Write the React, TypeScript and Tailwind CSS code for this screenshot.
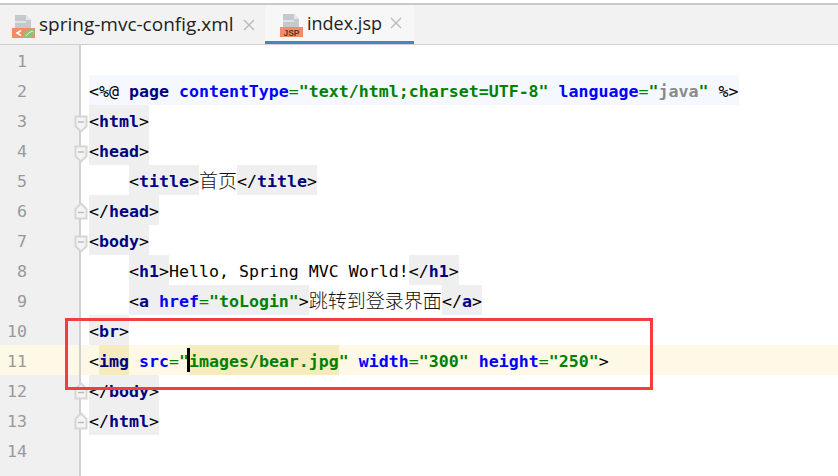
import type { ReactNode } from "react"

const mono = "font-['DejaVu_Sans_Mono','Liberation_Mono',monospace]"

// token helpers
const T = ({ children }: { children: ReactNode }) => <span className="font-bold text-[#000080]">{children}</span>
const A = ({ children }: { children: ReactNode }) => <span className="font-bold text-[#0000ff]">{children}</span>
const V = ({ children }: { children: ReactNode }) => <span className="font-bold text-[#008000]">{children}</span>
const G = ({ children }: { children: ReactNode }) => <span className="inline-block h-[30px] bg-[#efefef]">{children}</span>
const Y = ({ children }: { children: ReactNode }) => <span className="inline-block h-[30px] bg-[#f6ebbc]">{children}</span>
const Cjk = ({ children }: { children: ReactNode }) => (
  <span className="inline-block h-[30px] align-top text-[19px] leading-[30px] text-[#111] font-['Noto_Sans_CJK_SC',sans-serif] font-light">{children}</span>
)
const Tag = ({ name }: { name: string }) => <G>&lt;{name.startsWith("/") ? "/" : ""}<T>{name.replace("/", "")}</T>&gt;</G>

function FoldMark({ up }: { up?: boolean }) {
  return (
    <svg viewBox="0 0 14 18" className={`absolute left-[74px] h-[18px] w-[14px] ${up ? "top-[7px]" : "top-[10px]"}`}>
      <path
        d={up ? "M1.5 16.5h11V7L7 1.5 1.5 7z" : "M1.5 1.5h11V11L7 16.5 1.5 11z"}
        fill="#f4f4f4"
        stroke="#d6d6d6"
        strokeWidth="2"
      />
      <path d={up ? "M4 10.5h6" : "M4 7h6"} stroke="#b8b8b8" strokeWidth="1.4" />
    </svg>
  )
}

function Row({ n, fold, bg, children }: { n: number; fold?: "open" | "close"; bg?: string; children?: ReactNode }) {
  return (
    <div className={`flex h-[30px] leading-[34px] text-[16.6px] ${bg ?? ""}`}>
      <div className={`relative w-[81px] shrink-0 border-r-2 border-[#d0d0d0] ${bg ? "" : "bg-[#f0f0f0]"}`}>
        <span className="block w-[27px] text-right text-[#999]">{n}</span>
        {fold && <FoldMark up={fold === "close"} />}
      </div>
      <div className="whitespace-pre pl-[8px] text-black">{children}</div>
    </div>
  )
}

function FileBase() {
  return (
    <>
      <path d="M3 0h11l5 5v8H3z" fill="#c3c9cd" />
      <path d="M14 0v5h5z" fill="#e6e8ea" />
      <path d="M3 7h11" stroke="#f4f4f4" strokeWidth="1.2" />
    </>
  )
}

function XmlIcon() {
  return (
    <svg viewBox="0 0 24 24" className="mt-[5px] h-6 w-6 shrink-0">
      <FileBase />
      <rect x="0" y="13" width="23" height="10" fill="#f28c64" />
      <path d="M9 15.5l-4 2.5 4 2.5" fill="none" stroke="#fff" strokeWidth="1.6" />
      <path d="M11 23c0-6 4-9 12-9 1 6-3 9-8 9z" fill="#8cc379" />
      <path d="M14 21c2-3 4-4 7-5" fill="none" stroke="#e5f2dd" strokeWidth="1" />
    </svg>
  )
}

function JspIcon() {
  return (
    <svg viewBox="0 0 24 24" className="mt-[5px] h-6 w-6 shrink-0">
      <FileBase />
      <rect x="0" y="13" width="23" height="10" fill="#f28c64" />
      <text x="11.5" y="21.5" textAnchor="middle" fontSize="8.5" fontWeight="700" fill="#5d3a28" fontFamily="Liberation Sans, sans-serif">
        JSP
      </text>
    </svg>
  )
}

function CloseX() {
  return (
    <svg viewBox="0 0 12 12" className="h-3 w-3 shrink-0">
      <path d="M1 1l10 10M11 1L1 11" stroke="#b9b9b9" strokeWidth="1.4" />
    </svg>
  )
}

export default function App() {
  return (
    <div className="relative flex h-[476px] w-[838px] flex-col overflow-hidden bg-white">
      {/* tab strip */}
      <div className="mt-[3px] h-[2px] bg-[#c9c9c9]" />
      <div className="flex h-[40px] border-b border-[#d0d0d0] bg-[#f2f2f2] font-['Open_Sans',sans-serif] text-[#222]">
        <div className="flex w-[265px] items-center pl-[12px] text-[19px]">
          <XmlIcon />
          <span className="ml-[3px] w-[204px]">spring-mvc-config.xml</span>
          <CloseX />
        </div>
        <div className="flex w-[149px] items-center border-b-[3px] border-[#4a83c4] bg-[#f7f7f7] pl-[15px] text-[18px]">
          <JspIcon />
          <span className="ml-[3px] w-[83px]">index.jsp</span>
          <CloseX />
        </div>
      </div>

      {/* editor */}
      <div className={`flex flex-1 flex-col ${mono}`}>
        <Row n={1} />
        <Row n={2}>
          <span className="inline-block h-[30px] w-[650px] bg-[#f5f8fe]">
            &lt;%@ <T>page</T> <A>contentType</A><span className="text-[#008000]">=</span><V>"text/html;charset=UTF-8"</V> <A>language</A><span className="text-[#008000]">=</span><V>"<span className="text-[#8a8a8a]">java</span>"</V> %&gt;
          </span>
        </Row>
        <Row n={3} fold="open"><Tag name="html" /></Row>
        <Row n={4} fold="open"><Tag name="head" /></Row>
        <Row n={5}>
          {"    "}<Tag name="title" /><Cjk>首页</Cjk><Tag name="/title" />
        </Row>
        <Row n={6} fold="close"><Tag name="/head" /></Row>
        <Row n={7} fold="open"><Tag name="body" /></Row>
        <Row n={8}>
          {"    "}<Tag name="h1" />Hello, Spring MVC World!<Tag name="/h1" />
        </Row>
        <Row n={9}>
          {"    "}<G>&lt;<T>a</T> <A>href</A><span className="text-[#008000]">=</span><V>"toLogin"</V>&gt;</G><Cjk>跳转到登录界面</Cjk><Tag name="/a" />
        </Row>
        <Row n={10}><Tag name="br" /></Row>
        <Row n={11} bg="bg-[#fdf9e6]">
          &lt;<Y><T>img</T></Y> <A>src</A><span className="text-[#008000]">=</span><V>"</V>
          <Y><V>images/bear.jpg</V></Y><V>"</V> <A>width</A><span className="text-[#008000]">=</span><V>"300"</V> <A>height</A><span className="text-[#008000]">=</span><V>"250"</V>&gt;
        </Row>
        <Row n={12} fold="close"><Tag name="/body" /></Row>
        <Row n={13} fold="close"><Tag name="/html" /></Row>
        <Row n={14} />
        <div className="w-[81px] flex-1 border-r-2 border-[#d0d0d0] bg-[#f0f0f0]" />
      </div>

      {/* caret and the red annotation box lie over the code */}
      <div className="absolute left-[187px] top-[348px] h-[24px] w-[3px] bg-black" />
      <div className="absolute left-[65px] top-[318px] h-[72px] w-[588px] border-[3px] border-[#f43e3e]" />
    </div>
  )
}
